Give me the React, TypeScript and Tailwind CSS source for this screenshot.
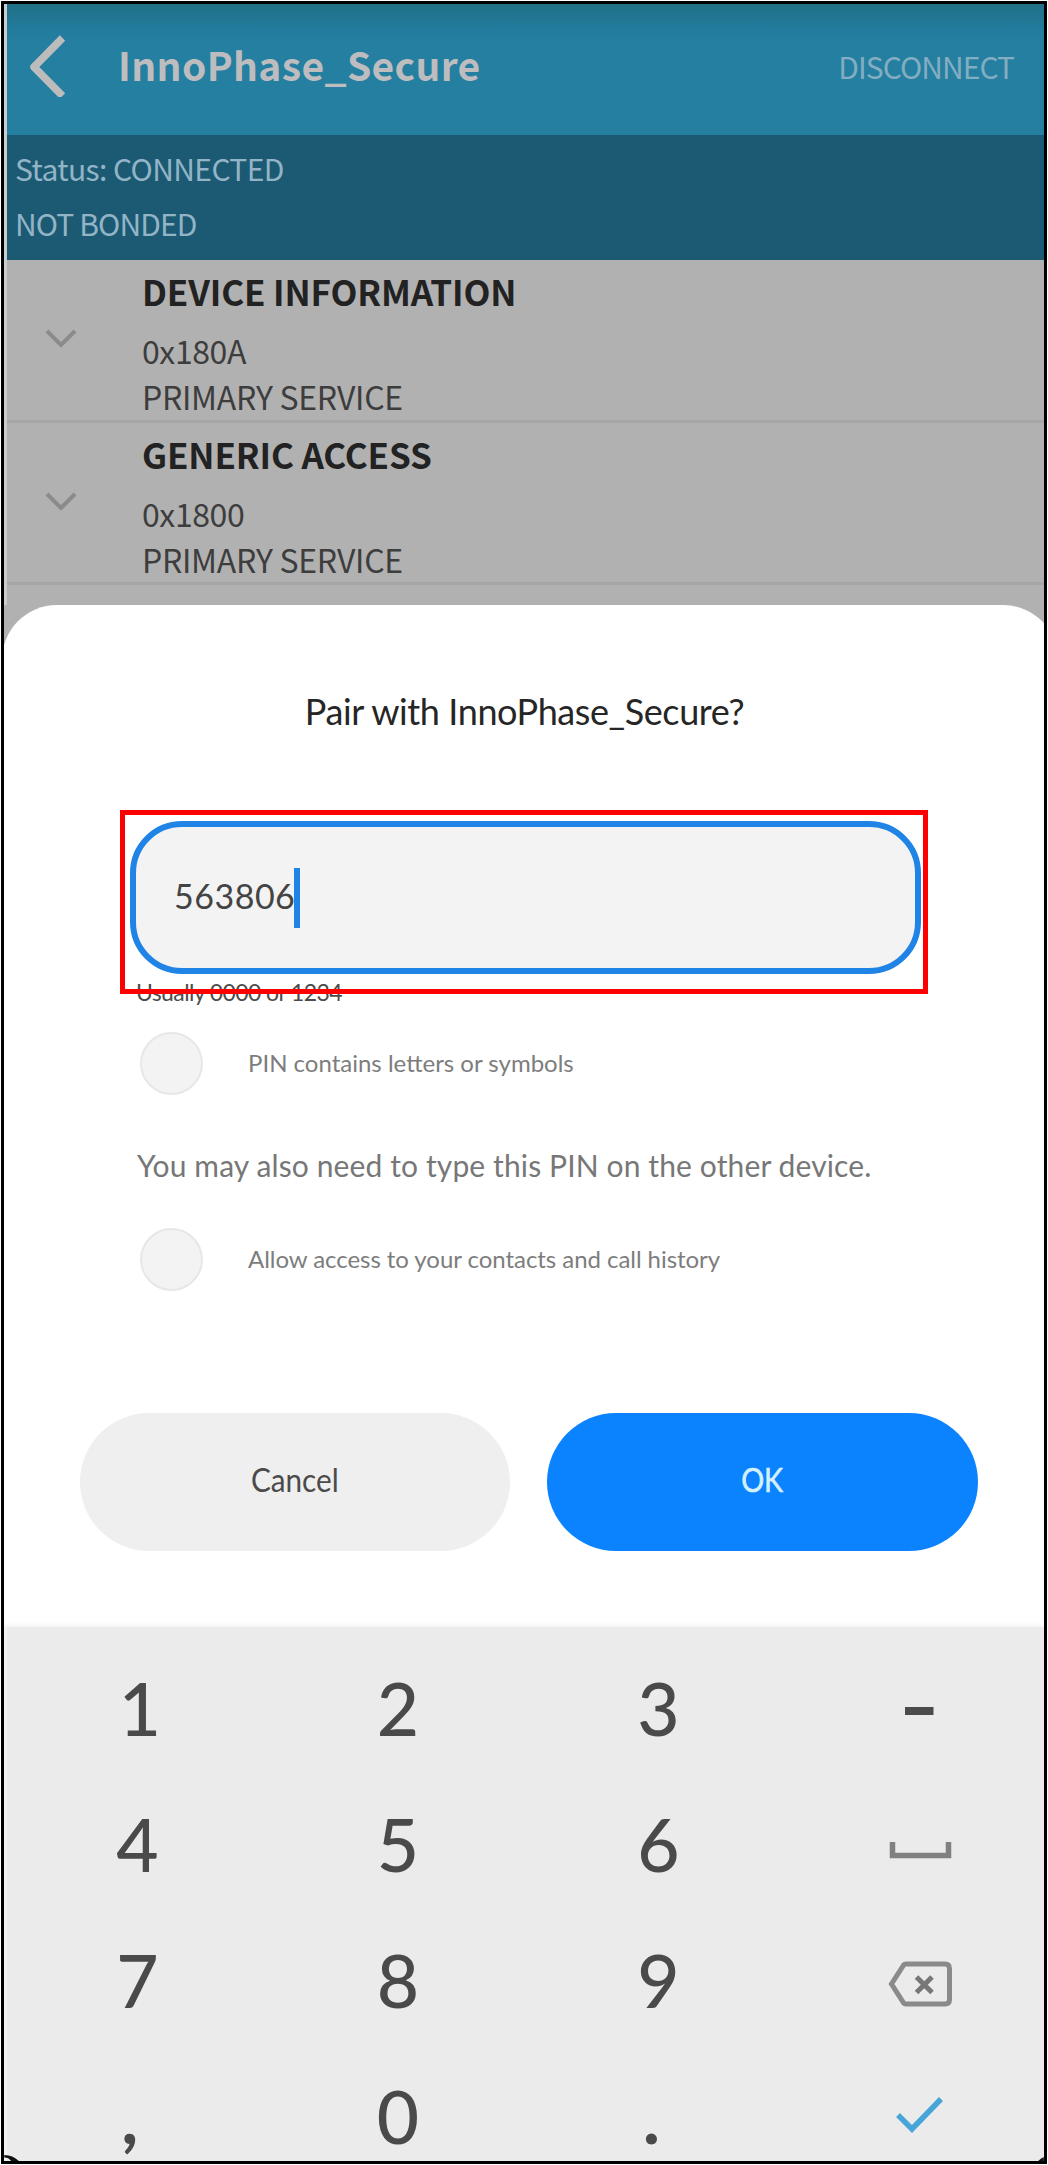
import type { ReactNode } from "react";

const services = [
  { name: "DEVICE INFORMATION", uuid: "0x180A", spacing: "tracking-[-0.15px]" },
  { name: "GENERIC ACCESS", uuid: "0x1800", spacing: "tracking-[-0.15px]" },
];

function Service({ name, uuid, spacing }: (typeof services)[number]) {
  return (
    <div className="flex h-[162.5px] border-b-[3px] border-[#a6a6a6] pt-[3px]">
      <div className="w-[135px] shrink-0 pt-[65px] pl-[38px]">
        <svg width="32" height="22" viewBox="0 0 32 22" fill="none" stroke="#8b8b8b" strokeWidth="4">
          <path d="M2 3 L16 17 L30 3" />
        </svg>
      </div>
      <div className="whitespace-nowrap text-[32px] text-[#3d3d3d]">
        <div className={`text-[35px] leading-[56px] font-bold text-[#222222] ${spacing}`}>{name}</div>
        <div className="mt-2 leading-[46px] tracking-[-0.4px]">{uuid}</div>
        <div className="leading-[46px] tracking-[-0.3px]">PRIMARY SERVICE</div>
      </div>
    </div>
  );
}

function Option({ children, spacing }: { children: ReactNode; spacing: string }) {
  return (
    <div className="flex h-[63px] items-center">
      <div className="size-[63px] shrink-0 rounded-full border-2 border-[#e7e7e7] bg-[#f3f3f3]" />
      <span className={`-mt-[2px] ml-[45px] whitespace-nowrap text-[24px] leading-none text-[#7d7d7d] ${spacing}`}>
        {children}
      </span>
    </div>
  );
}

function KeyIcon({ children }: { children: ReactNode }) {
  return (
    <svg width="80" height="80" viewBox="0 0 80 80" fill="none" stroke="#8a8a8a" strokeWidth="5">
      {children}
    </svg>
  );
}

const keys: ReactNode[] = [
  <span className="ml-[5px]">1</span>, "2", "3",
  <KeyIcon><path d="M26 43 H54.5" stroke="#4b4b4b" strokeWidth="8" /></KeyIcon>,
  "4", "5", "6",
  <KeyIcon><path d="M13.5 38 V51.5 H69.5 V38" stroke="#808080" strokeWidth="5.5" /></KeyIcon>,
  "7", "8", "9",
  <KeyIcon>
    <path d="M27 24 H66 Q70.5 24 70.5 28.5 V59.5 Q70.5 64 66 64 H27 Q25.5 64 24.5 62.8 L12.5 44 L24.5 25.2 Q25.5 24 27 24 Z" />
    <path d="M37.5 37 L53 52.5 M53 37 L37.5 52.5" stroke="#777777" />
  </KeyIcon>,
  <span className="mr-[15px] font-bold">,</span>, "0", <span className="mr-[14px] font-bold">.</span>,
  <KeyIcon><path d="M19 39 L33 53 L62 23" stroke="#48a5da" strokeWidth="5.5" /></KeyIcon>,
];

export default function App() {
  return (
    <div className="h-[2165px] w-[1048px] bg-white pt-px pl-px">
      <div className="relative h-[2163px] w-[1046px] overflow-hidden border-[3px] border-black bg-[#b1b1b1] font-['Noto_Sans_CJK_SC',sans-serif]">
        <div className="h-[601px] border-l-[3px] border-[#c9cdce]">
          <header className="flex h-[131px] items-center bg-linear-to-b from-[#217087] via-[#227c9e] via-20% to-[#247fa0] to-30% pr-[30px] pb-[11px] pl-[21px]">
            <svg width="40" height="66" viewBox="0 0 40 66" fill="none" stroke="#bdbcbc" strokeWidth="7.5" strokeLinejoin="round">
              <path d="M34.5 7 L6 36 L34.5 65" />
            </svg>
            <h1 className="ml-[50px] text-[39px] leading-none font-bold tracking-[0.35px] text-[#bdbcbf]">InnoPhase_Secure</h1>
            <span className="mt-[3px] ml-auto text-[30px] leading-none tracking-[-0.95px] text-[#83adc0]">DISCONNECT</span>
          </header>
          <div className="h-[125px] bg-[#1b5a72] pt-[6px] pl-[8px] text-[30px] leading-[55px] text-[#93b4c6]">
            <div className="tracking-[-0.6px]">Status: CONNECTED</div>
            <div className="tracking-[-0.9px]">NOT BONDED</div>
          </div>
          {services.map((s) => (
            <Service key={s.name} {...s} />
          ))}
        </div>

        <section className="relative -mr-[14px] -ml-[2px] h-[1022px] rounded-t-[55px] bg-white pt-[76px] pl-[2px] font-['Lato',sans-serif]">
          <h2 className="w-[1041px] text-center text-[36px] leading-[60px] tracking-[-0.4px] text-[#262626]">
            Pair with InnoPhase_Secure?
          </h2>

          <div className="relative mt-[80px] ml-[126px] flex h-[153px] w-[791px] items-center rounded-[52px] border-[6px] border-[#2083e6] bg-[#f3f3f3] pl-[38px]">
            <span className="-mt-[3px] text-[34px] leading-none tracking-[0.5px] text-[#444444]">563806</span>
            <span className="-ml-px h-[60px] w-[6px] bg-[#2083e6]" />
            <div className="absolute -top-[17px] -left-[16px] h-[184px] w-[808px] border-[5px] border-[#ff0000]" />
          </div>

          <div className="ml-[132px] text-[23px] leading-[36px] tracking-[-0.6px] text-[#4c4c4c]">Usually 0000 or 1234</div>

          <div className="mt-[22px] ml-[136px]">
            <Option spacing="tracking-[0px]">PIN contains letters or symbols</Option>
            <p className="mt-[50px] mb-[43px] -ml-[3px] text-[30px] leading-[40px] tracking-[0.12px] text-[#777777]">
              You may also need to type this PIN on the other device.
            </p>
            <Option spacing="tracking-[-0.05px]">Allow access to your contacts and call history</Option>
          </div>

          <div className="mt-[122px] ml-[76px] flex gap-[37px] text-[33px] leading-none">
            <button className="h-[138px] w-[430px] rounded-full bg-[#efefef] pb-[5px] text-[#4b4b4b]">
              <span className="inline-block scale-x-90">Cancel</span>
            </button>
            <button className="h-[138px] w-[431px] rounded-full bg-[#0b83ff] pb-[5px] text-[#d5f0fa]">
              <span className="inline-block scale-x-87 [-webkit-text-stroke:0.6px_#d5f0fa]">OK</span>
            </button>
          </div>
        </section>

        <section className="relative h-[560px] border-l-[3px] border-[#f3f3f3] bg-[#ebebeb] pt-[13px] font-['Lato',sans-serif] shadow-[0_-1px_6px_#eeeeee]">
          <div className="grid grid-cols-[repeat(4,260.6px)] auto-rows-[136px] text-[73px] leading-none font-medium text-[#4a4a4a]">
            {keys.map((key, i) => (
              <div key={i} className="flex items-center justify-center">
                {key}
              </div>
            ))}
          </div>
        </section>

        <svg className="absolute bottom-0 left-0" width="16" height="6" viewBox="0 0 18 7">
          <path d="M0 0 Q10 0 17 7 H8 Q5 3 0 3 Z" fill="#111111" />
        </svg>
        <svg className="absolute right-0 bottom-0" width="6" height="4" viewBox="0 0 7 5">
          <path d="M7 0 V5 H0 Q3 2 7 0 Z" fill="#111111" />
        </svg>
      </div>
    </div>
  );
}
